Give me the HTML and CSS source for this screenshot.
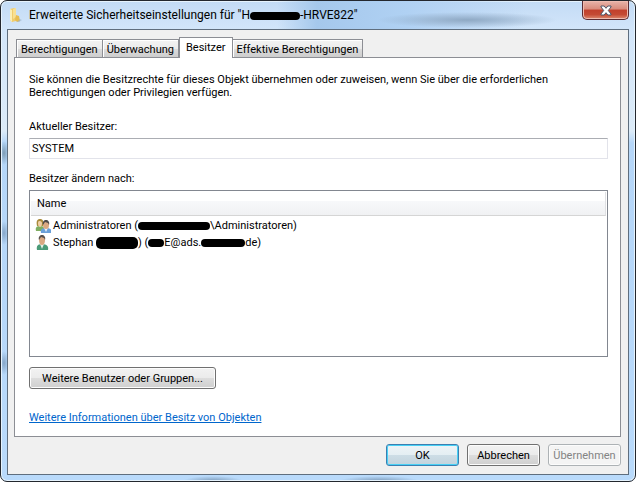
FILE: index.html
```html
<!DOCTYPE html>
<html lang="de">

<head>
    <meta charset="utf-8">
    <title>Erweiterte Sicherheitseinstellungen</title>
    <link rel="stylesheet" href="styles.css">
</head>

<body>
    <div class="window">
        <div class="titlebar">
            <svg class="folder-icon" width="16" height="16" viewBox="0 0 16 16">
                <path d="M3 2l4-1 2 1v12l-4 1-2-2z" fill="#f0cd6d" />
                <path d="M3 2l2 1v12l-2-2z" fill="#fbeeb5" />
                <path d="M6 2l3-1v9l-3 2z" fill="#f8e093" />
                <path d="M9 8l3 1 1 5-3 1-2-2z" fill="#e7bd52" />
                <path d="M13 12l2 1-3 2h-2z" fill="#9fb4c6" opacity=".6" />
            </svg>
            <h1 class="caption">Erweiterte Sicherheitseinstellungen für "H<span class="redacted redacted-host"></span>-HRVE822"</h1>
            <button class="close" aria-label="Schließen">
                <svg width="12" height="11" viewBox="0 0 12 11">
                    <path d="M1 1h3.200L6 3.300 7.800 1H11v1L8.300 5.500 11 9v1H7.800L6 7.700 4.200 10H1V9l2.700-3.500L1 2z" fill="#fff" stroke="#4d5468" />
                </svg>
            </button>
        </div>

        <div class="client">
            <div class="tabs" role="tablist">
                <button class="tab" role="tab">Berechtigungen</button>
                <button class="tab" role="tab">Überwachung</button>
                <button class="tab tab-active" role="tab" aria-selected="true">Besitzer</button>
                <button class="tab" role="tab">Effektive Berechtigungen</button>
            </div>

            <div class="panel">
                <p class="intro">Sie können die Besitzrechte für dieses Objekt übernehmen oder zuweisen, wenn Sie über die erforderlichen Berechtigungen oder Privilegien verfügen.</p>

                <label class="label" for="owner">Aktueller Besitzer:</label>
                <input class="owner" id="owner" type="text" value="SYSTEM" readonly>

                <div class="label" id="list-label">Besitzer ändern nach:</div>
                <table class="list" aria-labelledby="list-label">
                    <thead>
                        <tr>
                            <th>Name</th>
                        </tr>
                    </thead>
                    <tbody>
                        <tr>
                            <td>
                                <div class="account">
                                    <svg width="16" height="16" viewBox="0 0 16 16">
                                        <path d="M1 13c-1-4 1-5 4-5s5 1 4 5z" fill="#7fae62" />
                                        <path d="M2 8C1 3 2 1 5 1s4 2 3 7z" fill="#a98b3c" />
                                        <path d="M3 5c0-2 1-2 2-2s2 1 2 2c0 3-1 4-2 4S3 8 3 5z" fill="#f0cfa6" />
                                        <path d="M6 15c-1-4 1-5 5-5s6 1 5 5z" fill="#6a9fd8" />
                                        <path d="M9 10l2 4 2-4z" fill="#e8f1fa" />
                                        <path d="M8 7c0-3 1-4 3-4s3 1 3 4-1 4-3 4-3-1-3-4z" fill="#dba982" />
                                        <path d="M8 7c-1-3 1-5 3-5s4 2 3 5l-1-2-3-1z" fill="#4e4a49" />
                                    </svg>
                                    <span>Administratoren (<span class="redacted redacted-domain"></span>\Administratoren)</span>
                                </div>
                            </td>
                        </tr>
                        <tr>
                            <td>
                                <div class="account">
                                    <svg width="16" height="16" viewBox="0 0 16 16">
                                        <path d="M2 15c-1-4 1-6 5-6s7 2 6 6z" fill="#4b9b78" />
                                        <path d="M5 9l2 5 2-5z" fill="#e3f0e8" />
                                        <path d="M4 5c0-3 1-4 3-4s3 1 3 4-1 5-3 5-3-2-3-5z" fill="#dba982" />
                                        <path d="M4 5c-1-3 1-5 3-5s4 2 3 5L9 3 6 2z" fill="#57504c" />
                                    </svg>
                                    <span>Stephan <span class="redacted redacted-surname"></span>) (<span class="redacted redacted-user"></span>E@ads.<span class="redacted redacted-mail"></span>de)</span>
                                </div>
                            </td>
                        </tr>
                    </tbody>
                </table>

                <button class="button button-more">Weitere Benutzer oder Gruppen...</button>
                <a class="link" href="#">Weitere Informationen über Besitz von Objekten</a>
            </div>

            <div class="footer">
                <button class="button button-default">OK</button>
                <button class="button">Abbrechen</button>
                <button class="button" disabled>Übernehmen</button>
            </div>
        </div>
    </div>
</body>

</html>
```
FILE: styles.css
```css
* {
    box-sizing: border-box;
}

body {
    margin: 0;
    background: #fff;
    color: #000;
    font-family: Roboto, "Liberation Sans", sans-serif;
    font-size: 11px;
    line-height: 13px;
}

button,
input {
    font: inherit;
    color: inherit;
}

/* Glass frame with the blurred desktop behind it */
.window {
    display: flex;
    flex-direction: column;
    min-height: 100vh;
    padding: 0 6px 6px;
    border: 1px solid #23272e;
    border-radius: 7px;
    background:
        radial-gradient(ellipse 30px 5px at 212px 100%, #7d9bb9, transparent),
        radial-gradient(ellipse 40px 5px at 378px 100%, #7d9bb9, transparent),
        radial-gradient(ellipse 5px 12px at 3px 152px, #7d9cb5, transparent),
        radial-gradient(ellipse 5px 12px at 3px 232px, #86a6c8, transparent),
        radial-gradient(ellipse 5px 12px at 3px 362px, #86a6c8, transparent),
        linear-gradient(#c3dbf5, #d3e6fa 30px, #dcebf8 130px, #b5d6f8 142px, #b9dafb);
    box-shadow: inset 0 0 0 1px #e6f3fd;
}

/* Title bar */
.titlebar {
    display: flex;
    align-items: center;
    height: 28px;
    background:
        radial-gradient(ellipse 90px 8px at 460px 19px, #8fa9c4, transparent),
        linear-gradient(90deg, transparent 270px, #a5c8ec 310px, #b0d1f3 400px, transparent 520px);
}

.folder-icon {
    margin-right: 6px;
}

.caption {
    flex: 1;
    margin: 0;
    font-size: 12px;
    font-weight: normal;
    line-height: 16px;
    white-space: nowrap;
}

.close {
    display: flex;
    align-self: flex-start;
    align-items: center;
    justify-content: center;
    width: 47px;
    height: 19px;
    padding: 0;
    border: 1px solid #5a2c33;
    border-top: 0;
    border-radius: 0 0 5px 5px;
    background: linear-gradient(#e8b4aa, #d98b7c 45%, #c1402c 50%, #c44a34 75%, #dd8a70);
    box-shadow: inset 0 0 0 1px #eebbb0;
}

/* Blacked out names */
.redacted {
    display: inline-block;
    border-radius: 5px;
    background: #000;
    vertical-align: middle;
}

.redacted-host {
    width: 50px;
    height: 8px;
}

.redacted-domain {
    width: 72px;
    height: 8px;
}

.redacted-surname {
    width: 42px;
    height: 12px;
}

.redacted-user {
    width: 16px;
    height: 8px;
}

.redacted-mail {
    width: 44px;
    height: 8px;
}

/* Tabs */
.client {
    display: flex;
    flex: 1;
    flex-direction: column;
    padding: 7px 7px 8px 6px;
    border: 1px solid #5f6e7e;
    background: #f0f0f0;
}

.tabs {
    display: flex;
    align-items: flex-end;
    padding-left: 2px;
}

.tab {
    height: 18px;
    padding: 2px 4px 0;
    border: 1px solid #8c8e94;
    border-bottom: 0;
    background: linear-gradient(#f3f3f3, #ebebeb 50%, #dddddd 50%, #cdcdcd);
    box-shadow: inset 1px 1px 0 #fff;
    white-space: nowrap;
}

.tab + .tab {
    border-left: 0;
}

.tab + .tab-active {
    height: 21px;
    margin-bottom: -1px;
    padding: 0 6px 1px;
    border-left: 1px solid #8c8e94;
    background: #fff;
    z-index: 1;
}

.panel {
    display: flex;
    flex: 1;
    flex-direction: column;
    align-items: flex-start;
    padding: 15px 12px 12px 14px;
    border: 1px solid #8c8e94;
    background: #fff;
}

.intro {
    margin: 0 0 21px;
    padding-right: 40px;
}

.label {
    margin-bottom: 5px;
}

.owner {
    width: 100%;
    height: 21px;
    margin-bottom: 13px;
    padding: 0 2px;
    border: 1px solid #e2e3ea;
    border-top-color: #abadb3;
    background: #fff;
}

/* Account list */
.list {
    display: block;
    flex: 1;
    width: 100%;
    padding: 1px;
    border: 1px solid #828790;
}

.list thead,
.list tbody,
.list tr,
.list th,
.list td {
    display: block;
    padding: 0;
}

.list th {
    height: 24px;
    margin-bottom: 1px;
    padding-left: 6px;
    border-right: 1px solid #dfe0e3;
    border-bottom: 1px solid #d5d5d5;
    background: linear-gradient(#fff 40%, #f7f8fa 40%, #f0f1f3);
    font-weight: normal;
    line-height: 24px;
    text-align: left;
}

.account {
    display: flex;
    align-items: center;
    gap: 2px;
    height: 17px;
    padding-left: 4px;
    white-space: nowrap;
}

/* Buttons */
.button {
    width: 73px;
    height: 22px;
    padding: 0;
    border: 1px solid #707070;
    border-radius: 3px;
    background: linear-gradient(#f2f2f2, #ebebeb 50%, #dddddd 50%, #cfcfcf);
    box-shadow: inset 0 0 0 1px #fcfcfc;
}

.button-default {
    border-color: #3c7fb1;
    background: linear-gradient(#eef4f7, #e4eef3 50%, #cddde6 50%, #c2d3dd);
    box-shadow: inset 0 0 0 1px #48d0f5;
}

.button:disabled {
    border-color: #adb2b5;
    background: #f4f4f4;
    color: #838383;
}

.button-more {
    width: 187px;
    margin: 10px 0 22px;
}

.link {
    color: #0066cc;
}

.footer {
    display: flex;
    justify-content: flex-end;
    gap: 8px;
    padding-top: 7px;
}
```
